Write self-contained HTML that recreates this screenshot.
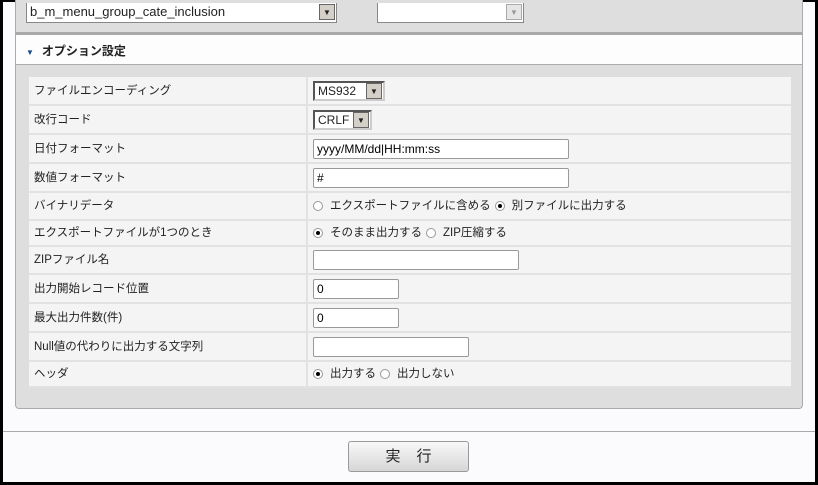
<!DOCTYPE html><html><head><meta charset="utf-8"><style>
*{box-sizing:border-box;margin:0;padding:0}
body{width:818px;height:485px;background:#000;font-family:"Liberation Sans","Noto Sans CJK JP",sans-serif;font-size:12px;color:#222;position:relative;overflow:hidden}
#f{position:absolute;left:3px;top:2px;right:3px;bottom:3px;background:#fbfbfd}
.top{position:absolute;left:12px;top:-2px;width:788px;height:35px;background:#dedede;border:1px solid #aaa;border-top:none;border-bottom:3px solid #aaa}
.sel{position:absolute;background:#fff;border:1px solid #888;height:20px;font-size:13px;padding:2px 3px}
.arr{position:absolute;right:1px;top:1px;width:16px;height:16px;background:#d4d0c8;border:1px solid #666;font-size:8px;text-align:center;line-height:15px}
.opt{position:absolute;left:12px;top:33px;width:788px;height:374px;background:#dedede;border:1px solid #aaa;border-top:none;border-radius:0 0 4px 4px}
.hd{height:30px;background:#fdfdfd;border-bottom:1px solid #aaa;padding:7px 0 0 10px;font-weight:bold;font-size:12px}
.hd b{color:#1a4a8a;font-size:8px;margin-right:8px}
.tb{position:absolute;left:13px;top:42px;width:762px}
.row{display:flex;border-bottom:2px solid #e2e2e2;background:#f4f4f4;font-size:11.5px;line-height:14px}
.row>div{display:flex;align-items:center;padding:0 5px}
.l{width:279px;border-right:2px solid #e2e2e2}
input{height:20px;border:1px solid #999;border-radius:2px;font:12px "Liberation Sans",sans-serif;padding:0 3px;background:#fff}
.r{display:inline-block;width:10px;height:10px;border:1px solid #999;border-radius:50%;background:#fff;margin-right:7px;position:relative;flex:none}
.r.c::after{content:"";position:absolute;left:2px;top:2px;width:4px;height:4px;border-radius:50%;background:#000}
.sp{width:4px}
.ds{display:inline-block;position:relative;border:2px solid #555;border-right-color:#ccc;border-bottom-color:#ccc;height:20px;background:#fff;font-size:12px;padding:1px 3px;line-height:15px}
.line{position:absolute;left:0;right:0;top:429px;border-top:1px solid #aaa}
.btn{position:absolute;left:345px;top:439px;width:121px;height:31px;border:1px solid #999;border-radius:3px;background:linear-gradient(#f8f8f8,#d6d6d6);text-align:center;line-height:29px;font-size:15px;letter-spacing:16px;padding-left:16px}
</style></head><body><div id="f">
<div class="top">
<div class="sel" style="left:10px;top:3px;width:311px;border-top:none;padding-top:1px">b_m_menu_group_cate_inclusion<div class="arr">▼</div></div>
<div class="sel" style="left:361px;top:3px;width:147px;border-top:none"><div class="arr" style="background:#e6e6e6;border-color:#aaa;color:#999">▼</div></div>
</div>
<div class="opt"><div class="hd"><b>▼</b>オプション設定</div>
<div class="tb">
<div class="row" style="height:29px"><div class="l">ファイルエンコーディング</div><div><span class="ds" style="width:72px">MS932<span class="arr" style="top:0">▼</span></span></div></div>
<div class="row" style="height:29px"><div class="l">改行コード</div><div><span class="ds" style="width:59px">CRLF<span class="arr" style="top:0">▼</span></span></div></div>
<div class="row" style="height:29px"><div class="l">日付フォーマット</div><div><input style="width:256px" value="yyyy/MM/dd|HH:mm:ss"></div></div>
<div class="row" style="height:29px"><div class="l">数値フォーマット</div><div><input style="width:256px" value="#"></div></div>
<div class="row" style="height:28px"><div class="l">バイナリデータ</div><div><span class="r"></span>エクスポートファイルに含める<span class="sp"></span><span class="r c"></span>別ファイルに出力する</div></div>
<div class="row" style="height:26px"><div class="l">エクスポートファイルが1つのとき</div><div><span class="r c"></span>そのまま出力する<span class="sp"></span><span class="r"></span>ZIP圧縮する</div></div>
<div class="row" style="height:28px"><div class="l">ZIPファイル名</div><div><input style="width:206px"></div></div>
<div class="row" style="height:29px"><div class="l">出力開始レコード位置</div><div><input style="width:86px" value="0"></div></div>
<div class="row" style="height:29px"><div class="l">最大出力件数(件)</div><div><input style="width:86px" value="0"></div></div>
<div class="row" style="height:29px"><div class="l">Null値の代わりに出力する文字列</div><div><input style="width:156px"></div></div>
<div class="row" style="height:26px"><div class="l">ヘッダ</div><div><span class="r c"></span>出力する<span class="sp"></span><span class="r"></span>出力しない</div></div>
</div></div>
<div class="line"></div>
<div class="btn">実行</div>
</div></body></html>
